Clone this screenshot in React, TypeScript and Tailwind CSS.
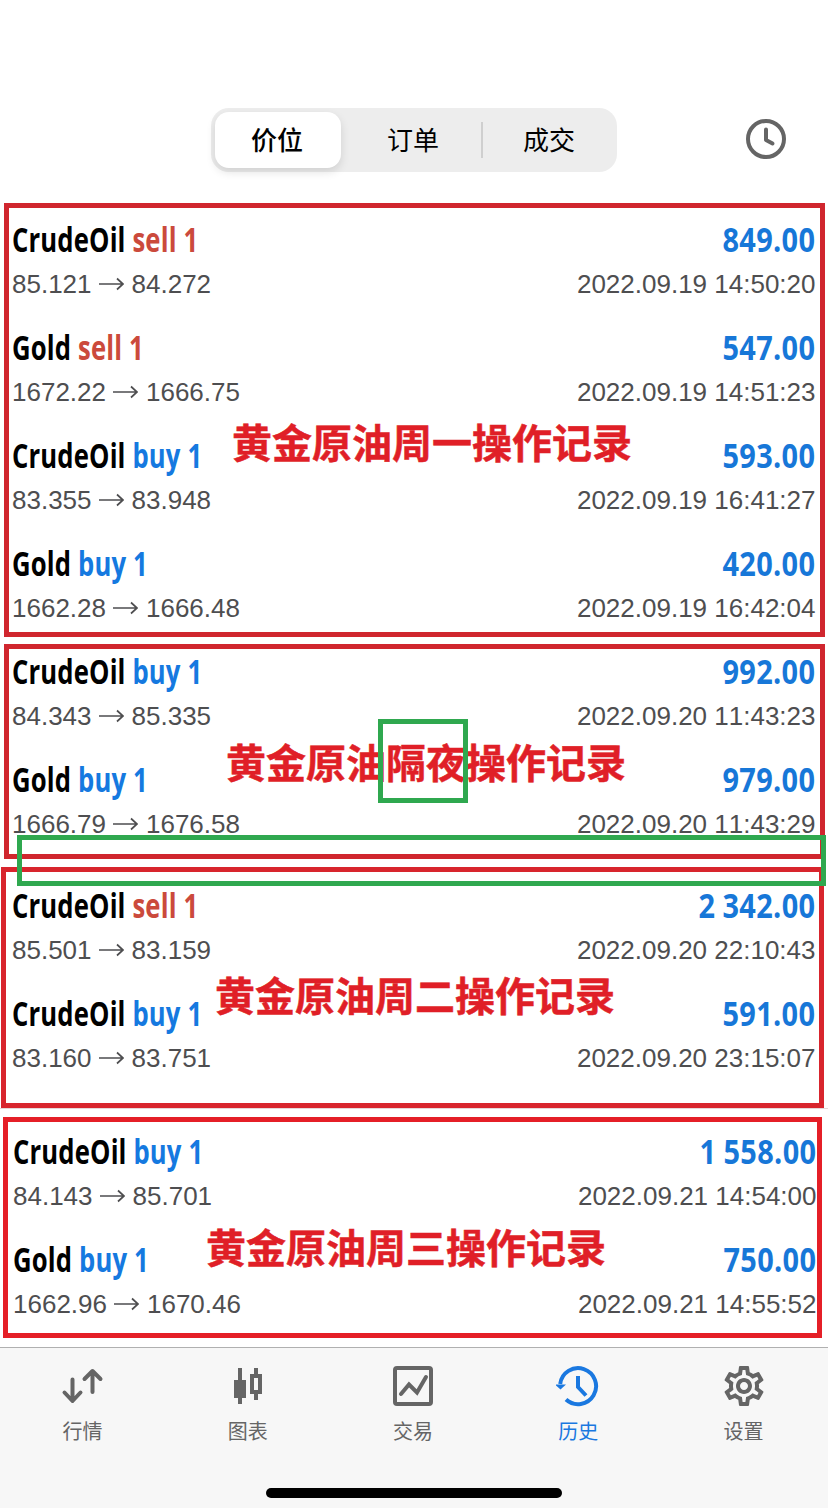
import type { ReactNode } from 'react';
import { MdOutlineSettings } from 'react-icons/md';

type Trade = {
  symbol: string;
  side: 'buy' | 'sell';
  from: string;
  to: string;
  profit: string;
  time: string;
};

const monday: Trade[] = [
  { symbol: 'CrudeOil', side: 'sell', from: '85.121', to: '84.272', profit: '849.00', time: '2022.09.19 14:50:20' },
  { symbol: 'Gold', side: 'sell', from: '1672.22', to: '1666.75', profit: '547.00', time: '2022.09.19 14:51:23' },
  { symbol: 'CrudeOil', side: 'buy', from: '83.355', to: '83.948', profit: '593.00', time: '2022.09.19 16:41:27' },
  { symbol: 'Gold', side: 'buy', from: '1662.28', to: '1666.48', profit: '420.00', time: '2022.09.19 16:42:04' },
];
const overnight: Trade[] = [
  { symbol: 'CrudeOil', side: 'buy', from: '84.343', to: '85.335', profit: '992.00', time: '2022.09.20 11:43:23' },
  { symbol: 'Gold', side: 'buy', from: '1666.79', to: '1676.58', profit: '979.00', time: '2022.09.20 11:43:29' },
];
const tuesday: Trade[] = [
  { symbol: 'CrudeOil', side: 'sell', from: '85.501', to: '83.159', profit: '2 342.00', time: '2022.09.20 22:10:43' },
  { symbol: 'CrudeOil', side: 'buy', from: '83.160', to: '83.751', profit: '591.00', time: '2022.09.20 23:15:07' },
];
const wednesday: Trade[] = [
  { symbol: 'CrudeOil', side: 'buy', from: '84.143', to: '85.701', profit: '1 558.00', time: '2022.09.21 14:54:00' },
  { symbol: 'Gold', side: 'buy', from: '1662.96', to: '1670.46', profit: '750.00', time: '2022.09.21 14:55:52' },
];

function TradeRow({ trade }: { trade: Trade }) {
  return (
    <div className="flex h-[108px] flex-col whitespace-nowrap">
      <div className="-mt-px flex h-9 items-center justify-between font-['Open_Sans',sans-serif] text-[34px] leading-9 font-bold">
        <div className="origin-left scale-x-[0.755] tracking-[0.200px]">
          {trade.symbol}{' '}
          <span className={trade.side === 'buy' ? 'text-[#1579e0]' : 'text-[#cb4a3c]'}>{trade.side} 1</span>
        </div>
        <div className="origin-right scale-x-[0.85] tracking-[0.400px] text-[#1777d8] [word-spacing:-1px]">
          {trade.profit}
        </div>
      </div>
      <div className="mt-[11px] flex h-8 items-center justify-between text-[26px] leading-8 text-[#4e4e50] [font-kerning:none]">
        <div className="flex items-center">
          {trade.from}
          <svg className="mr-[7.500px] ml-[7.500px] h-4 w-[25px]" viewBox="0 0 25 16" fill="none" stroke="currentColor" strokeWidth="1.7">
            <path d="M0 8H24M18 2.5L24 8L18 13.5" />
          </svg>
          {trade.to}
        </div>
        <div>{trade.time}</div>
      </div>
    </div>
  );
}

function Group({ trades, className, children }: { trades: Trade[]; className: string; children: ReactNode }) {
  return (
    <section className={`relative border-5 ${className}`}>
      {trades.map((t) => (
        <TradeRow key={t.time} trade={t} />
      ))}
      {children}
    </section>
  );
}

const caption =
  "absolute whitespace-nowrap font-['Noto_Sans_CJK_SC',sans-serif] text-[40px] leading-10 font-bold text-[#e01f27] [-webkit-text-stroke:0.5px_#e01f27]";

const tabIcon = 'h-11 w-11';

function QuotesIcon() {
  return (
    <svg className={tabIcon} viewBox="0 0 44 44" fill="none" stroke="currentColor" strokeWidth="4" strokeLinecap="round" strokeLinejoin="round">
      <path d="M11.500 15.500V37M3.500 28.500L11.500 37L19.500 28.500M31.500 28V7M23.500 15L31.500 7L39.500 15" />
    </svg>
  );
}

function CandlesIcon() {
  return (
    <svg className={tabIcon} viewBox="0 0 44 44" fill="currentColor">
      <path d="M12 4h4v12h4v18h-4v6h-4v-6H8V16h4z" />
      <path fillRule="evenodd" d="M28 4h4v6h4v20h-4v6h-4v-6h-4V10h4zM28 14v12h4V14z" />
    </svg>
  );
}

function TradeIcon() {
  return (
    <svg className={tabIcon} viewBox="0 0 44 44" fill="none" stroke="currentColor" strokeWidth="4" strokeLinejoin="round">
      <rect x="4" y="4" width="36" height="36" rx="2" />
      <path d="M10 30L18 20.500L26 28.500L35 13" strokeLinecap="round" strokeLinejoin="miter" />
    </svg>
  );
}

function HistoryIcon() {
  return (
    <svg className={tabIcon} viewBox="0 0 44 44" fill="none" stroke="currentColor" strokeWidth="4">
      <path d="M4.200 20A18 18 0 1 1 10 35.500" />
      <path d="M-1 20.500H10L4.500 25.500Z" fill="currentColor" stroke="none" />
      <path d="M22 12V23L30 31.500" />
    </svg>
  );
}

const tabs = [
  { label: '行情', icon: <QuotesIcon />, active: false },
  { label: '图表', icon: <CandlesIcon />, active: false },
  { label: '交易', icon: <TradeIcon />, active: false },
  { label: '历史', icon: <HistoryIcon />, active: true },
  { label: '设置', icon: <MdOutlineSettings className="-my-0.5 -mr-1 -ml-0.5 h-12 w-12" />, active: false },
];

export default function App() {
  return (
    <div className="flex h-[1508px] w-[828px] flex-col overflow-hidden bg-white font-['Liberation_Sans','Noto_Sans_CJK_SC',sans-serif] text-black">
      <header className="flex h-[203px] shrink-0 items-start pt-[108px] pl-[211px]">
        <div className="flex h-16 w-[406px] items-center rounded-[18px] bg-[#ededed] p-1 text-[26px] leading-none">
          <div className="flex h-14 w-[126px] items-center justify-center rounded-[14px] bg-white pt-0.5 pr-0.5 font-medium shadow-[0_4px_10px_rgba(0,0,0,0.12)]">
            价位
          </div>
          <div className="flex h-9 w-[142px] items-center justify-center border-r-2 border-[#cfcfcf] pt-0.5 pl-1">订单</div>
          <div className="flex h-9 flex-1 items-center justify-center pt-0.5 pl-0.5">成交</div>
        </div>
        <svg className="mt-[11px] ml-[129px] h-10 w-10 text-[#656565]" viewBox="0 0 40 40" fill="none" stroke="currentColor" strokeWidth="4">
          <circle cx="20" cy="20" r="18" />
          <path d="M20 10.500V21L26.500 24.500" strokeLinecap="round" strokeLinejoin="round" />
        </svg>
      </header>

      <main className="flex h-[1144px] shrink-0 flex-col">
        <Group trades={monday} className="ml-1 h-[434px] w-[821px] border-[#d0262e] pt-[14px] pr-[4.500px] pl-[3px]">
          <h2 className={`${caption} top-[213px] left-[223px]`}>黄金原油周一操作记录</h2>
        </Group>
        <Group trades={overnight} className="mt-[7px] ml-1 h-[215px] w-[821px] border-[#d0262e] pt-[5px] pr-[4.500px] pl-[3px]">
          <h2 className={`${caption} top-[92px] left-[217px]`}>黄金原油隔夜操作记录</h2>
          <div className="absolute top-[70px] left-[369px] h-[84px] w-[90px] border-5 border-[#2fa84f]" />
        </Group>
        <Group trades={tuesday} className="mt-2 ml-px h-[241px] w-[823px] border-[#d8252d] pt-4 pr-[3.500px] pl-[6px]">
          <h2 className={`${caption} top-[102px] left-[209px]`}>黄金原油周二操作记录</h2>
          <div className="absolute -top-[37px] left-[11px] h-[51px] w-[809px] border-5 border-[#2fa84f]" />
        </Group>
        <div className="h-px bg-[#e6d6d8]" />
        <Group trades={wednesday} className="mt-2 ml-[3px] h-[221px] w-[819px] border-[#e51f27] pt-3 pr-[0.500px] pl-[5px]">
          <h2 className={`${caption} top-[104px] left-[198px]`}>黄金原油周三操作记录</h2>
        </Group>
      </main>

      <footer className="flex flex-1 flex-col border-t border-[#b0b0b0] bg-[#f7f7f7]">
        <nav className="grid h-[140px] w-[826px] grid-cols-5 pt-4">
          {tabs.map((t) => (
            <div key={t.label} className={`flex flex-col items-center ${t.active ? 'text-[#1a78e0]' : 'text-[#656565]'}`}>
              {t.icon}
              <span className="mt-[14px] text-[20px] leading-5">{t.label}</span>
            </div>
          ))}
        </nav>
        <div className="mx-auto h-2.5 w-[296px] rounded-full bg-black" />
      </footer>
    </div>
  );
}
